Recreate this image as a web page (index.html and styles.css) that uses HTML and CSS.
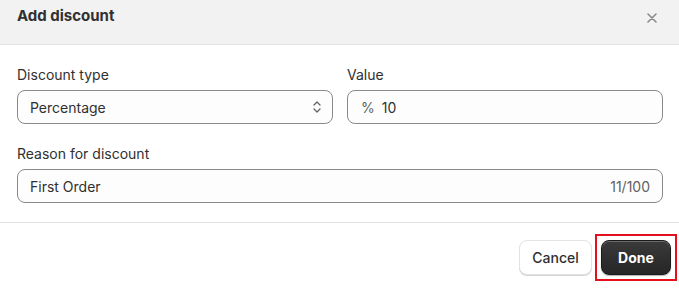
FILE: index.html
```html
<!DOCTYPE html>
<html lang="en">
<head>
    <meta charset="UTF-8">
    <meta name="viewport" content="width=device-width, initial-scale=1.0">
    <title>Add discount</title>
    <link rel="stylesheet" href="styles.css">
</head>
<body>
    <div class="modal">
        <div class="modal-header">
            <h2 class="modal-title">Add discount</h2>
            <button class="close-btn" aria-label="Close">
                <svg width="10" height="10" viewBox="0 0 10 10">
                    <path d="M1 1 L9 9 M9 1 L1 9" stroke="#8a8a8a" stroke-width="1.6" stroke-linecap="round"/>
                </svg>
            </button>
        </div>
        <div class="modal-body">
            <div class="row two-col">
                <div class="field">
                    <label class="label">Discount type</label>
                    <div class="input select">
                        <span>Percentage</span>
                        <svg class="chevrons" width="10" height="16" viewBox="0 0 10 16">
                            <path d="M2 6 L5 3 L8 6 M2 10 L5 13 L8 10" fill="none" stroke="#616161" stroke-width="1.3" stroke-linecap="round" stroke-linejoin="round"/>
                        </svg>
                    </div>
                </div>
                <div class="field">
                    <label class="label">Value</label>
                    <div class="input">
                        <span class="prefix">%</span>
                        <span>10</span>
                    </div>
                </div>
            </div>
            <div class="row">
                <div class="field">
                    <label class="label">Reason for discount</label>
                    <div class="input">
                        <span class="grow">First Order</span>
                        <span class="counter">11/100</span>
                    </div>
                </div>
            </div>
        </div>
        <div class="modal-footer">
            <button class="btn btn-secondary">Cancel</button>
            <div class="highlight">
                <button class="btn btn-primary">Done</button>
            </div>
        </div>
    </div>
</body>
</html>
```

FILE: styles.css
```css
* {
  box-sizing: border-box;
}

body {
  margin: 0;
  background: #ffffff;
  font-family: Inter, "Liberation Sans", sans-serif;
  font-size: 14px;
  color: #303030;
}

.modal {
  width: 679px;
  height: 291px;
  overflow: hidden;
}

.modal-header {
  display: flex;
  justify-content: space-between;
  align-items: flex-start;
  height: 45px;
  padding: 6px 21px 0 17px;
  background: #f2f2f2;
  border-bottom: 1px solid #e3e3e3;
}

.modal-title {
  margin: 0;
  font-size: 15px;
  line-height: 20px;
  font-weight: 650;
  color: #303030;
}

.close-btn {
  border: none;
  background: none;
  padding: 0;
  margin-top: 5px;
  width: 12px;
  height: 12px;
  cursor: pointer;
}

.modal-body {
  padding: 20px 16px 19px 17px;
  border-bottom: 1px solid #e3e3e3;
}

.row {
  display: flex;
  gap: 14px;
}

.row + .row {
  margin-top: 20px;
}

.field {
  flex: 1;
  display: flex;
  flex-direction: column;
}

.label {
  line-height: 20px;
  margin-bottom: 5px;
}

.input {
  display: flex;
  align-items: center;
  height: 34px;
  padding: 0 12px;
  border: 1px solid #8a8a8a;
  border-radius: 8px;
  background: #fdfdfd;
}

.select {
  justify-content: space-between;
  padding-right: 10px;
}

.prefix {
  color: #616161;
  margin-right: 7px;
  margin-left: 1px;
}

.grow {
  flex: 1;
}

.counter {
  color: #616161;
}

.modal-footer {
  display: flex;
  justify-content: flex-end;
  align-items: center;
  gap: 3px;
  padding: 11px 2px 0 0;
}

.btn {
  height: 35px;
  border-radius: 8px;
  font-family: Inter, "Liberation Sans", sans-serif;
  font-size: 14px;
  cursor: pointer;
}

.btn-secondary {
  width: 73px;
  background: #ffffff;
  color: #303030;
  font-weight: 500;
  border: 1px solid #e3e3e3;
  box-shadow: 0 1px 0 #d4d4d4;
}

.highlight {
  padding: 4px;
  border: 2px solid #e5101e;
}

.btn-primary {
  width: 70px;
  background: linear-gradient(#3a3a3a, #262626);
  color: #ffffff;
  font-weight: 700;
  border: 1px solid #1a1a1a;
  box-shadow: inset 0 1px 0 rgba(255, 255, 255, 0.25), 0 1px 1px rgba(0, 0, 0, 0.3);
}
```
